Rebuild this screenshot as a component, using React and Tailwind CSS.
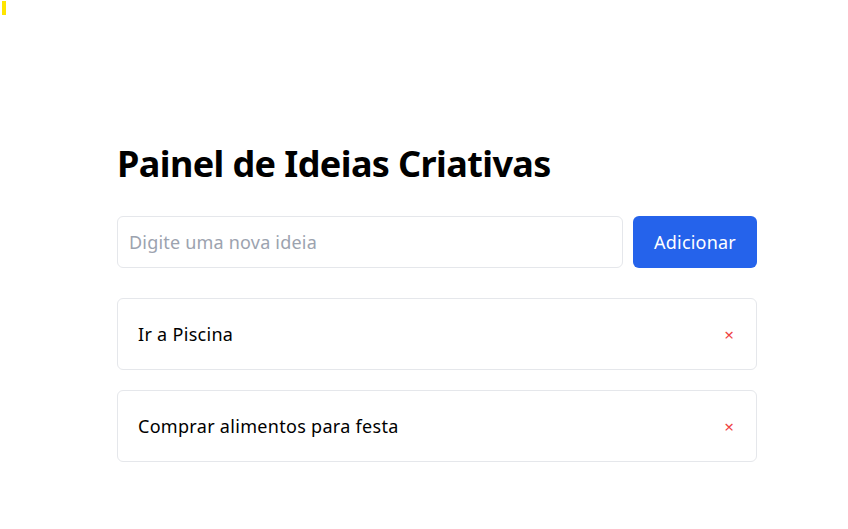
export default function App() {
  const ideas = ["Ir a Piscina", "Comprar alimentos para festa"];
  return (
    <div className="relative min-h-[529px] bg-white" style={{ fontFamily: '"Noto Sans", "Open Sans", sans-serif' }}>
      <div className="absolute left-[2px] top-[1px] h-[14px] w-[4px] bg-[#ffe500]" />
      <div className="flex justify-center pl-[26px] pt-[140px]">
        <div className="w-[640px]">
          <h1 className="text-[36px] font-bold leading-[48px] tracking-[-0.6px] text-black">Painel de Ideias Criativas</h1>
          <div className="mt-[28px] flex gap-[10px]">
            <input
              className="h-[52px] flex-1 rounded-md border border-[#e5e7eb] px-[11px] text-[18px] tracking-[0.2px] text-black placeholder:text-[#9ca3af] outline-none"
              placeholder="Digite uma nova ideia"
            />
            <button className="h-[52px] w-[124px] rounded-md bg-[#2563eb] text-[18px] tracking-[0.2px] text-white">Adicionar</button>
          </div>
          <ul className="mt-[30px] flex flex-col gap-[20px]">
            {ideas.map((t) => (
              <li key={t} className="flex h-[72px] items-center justify-between rounded-md border border-[#e5e7eb] pl-[20px] pr-[22px]">
                <span className="text-[18px] tracking-[0.3px] text-black">{t}</span>
                <button className="text-[17px] leading-none text-[#ef4444]">×</button>
              </li>
            ))}
          </ul>
        </div>
      </div>
    </div>
  );
}
